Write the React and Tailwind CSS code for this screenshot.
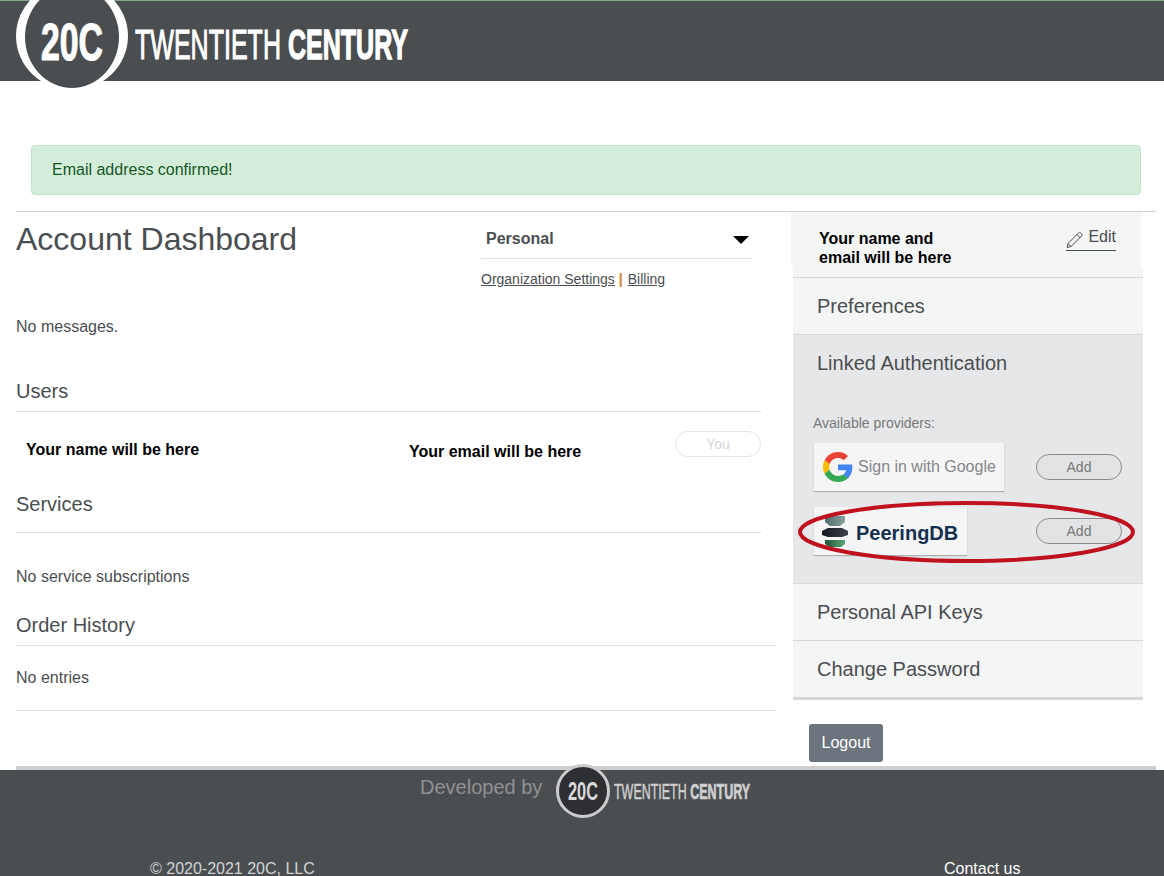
const HeaderLogo = () => (
  <svg className="absolute left-4 top-0 overflow-visible" width="400" height="90" viewBox="0 0 400 90">
    <ellipse cx="56" cy="35" rx="56" ry="54" fill="#ffffff" />
    <ellipse cx="56" cy="36" rx="47" ry="51" fill="#4b4e51" />
    <text x="25" y="59" fill="#fff" stroke="#fff" strokeWidth="1.2" fontFamily="Liberation Sans, sans-serif" fontWeight="700" fontSize="52" textLength="62" lengthAdjust="spacingAndGlyphs">20C</text>
    <text x="119" y="58" fill="#fff" stroke="#fff" strokeWidth="1.1" fontFamily="Liberation Sans, sans-serif" fontSize="43" textLength="273" lengthAdjust="spacingAndGlyphs">
      TWENTIETH <tspan fontWeight="700" strokeWidth="1.4">CENTURY</tspan>
    </text>
  </svg>
);

const FooterLogo = () => (
  <svg className="absolute left-[555px] top-[-7px] overflow-visible" width="196" height="56" viewBox="0 0 196 56">
    <circle cx="28" cy="28" r="25.5" fill="#2e2f32" stroke="#cccccc" strokeWidth="3" />
    <text x="13" y="37" fill="#d8d8d8" fontFamily="Liberation Sans, sans-serif" fontWeight="700" fontSize="25" textLength="30" lengthAdjust="spacingAndGlyphs">20C</text>
    <text x="59" y="36" fill="#d0d0d0" stroke="#d0d0d0" strokeWidth="0.5" fontFamily="Liberation Sans, sans-serif" fontSize="22" textLength="136" lengthAdjust="spacingAndGlyphs">
      TWENTIETH <tspan fontWeight="700" strokeWidth="0.7">CENTURY</tspan>
    </text>
  </svg>
);

const GoogleG = () => (
  <svg width="30" height="30" viewBox="0 0 48 48">
    <path fill="#EA4335" d="M24 9.5c3.54 0 6.71 1.22 9.21 3.6l6.85-6.85C35.9 2.38 30.47 0 24 0 14.62 0 6.51 5.38 2.56 13.22l7.98 6.19C12.43 13.72 17.74 9.5 24 9.5z" />
    <path fill="#4285F4" d="M46.98 24.55c0-1.57-.15-3.09-.38-4.55H24v9.02h12.94c-.58 2.96-2.26 5.48-4.78 7.18l7.73 6c4.51-4.18 7.09-10.36 7.09-17.65z" />
    <path fill="#FBBC05" d="M10.53 28.59c-.48-1.45-.76-2.99-.76-4.59s.27-3.14.76-4.59l-7.98-6.19C.92 16.46 0 20.12 0 24c0 3.88.92 7.54 2.56 10.78l7.97-6.19z" />
    <path fill="#34A853" d="M24 48c6.48 0 11.93-2.13 15.89-5.81l-7.73-6c-2.15 1.45-4.92 2.3-8.16 2.3-6.26 0-11.57-4.22-13.47-9.91l-7.98 6.19C6.51 42.62 14.62 48 24 48z" />
  </svg>
);

const PeeringMark = () => (
  <svg width="26" height="31" viewBox="0 0 26 31">
    <defs>
      <linearGradient id="peerTop" x1="0" x2="1" y1="0" y2="0">
        <stop offset="0" stopColor="#4f6e6b" />
        <stop offset="1" stopColor="#8ba19e" />
      </linearGradient>
      <linearGradient id="peerMid" x1="0" x2="1" y1="0" y2="0">
        <stop offset="0" stopColor="#14181e" />
        <stop offset="1" stopColor="#3d424a" />
      </linearGradient>
      <linearGradient id="peerBottom" x1="0" x2="1" y1="0" y2="0">
        <stop offset="0" stopColor="#24543a" />
        <stop offset="1" stopColor="#5aa576" />
      </linearGradient>
    </defs>
    <path d="M3 0h20v6l-5 4H8L3 6z" fill="url(#peerTop)" />
    <path d="M0 15l6-3h14l6 3v4l-6 2H6l-6-2z" fill="url(#peerMid)" />
    <path d="M3 24h20v4l-4 3H7l-4-3z" fill="url(#peerBottom)" />
  </svg>
);

const PencilIcon = () => (
  <svg width="18" height="18" viewBox="0 0 18 18" fill="none" stroke="#4b4e51" strokeWidth="1">
    <path d="M2 12.5 12.5 2a1.6 1.6 0 0 1 2.3 0l.7.7a1.6 1.6 0 0 1 0 2.3L5 15.5l-3.8 1z" />
    <path d="m11 3.5 3.5 3.5M2 12.5 5 15.5" />
  </svg>
);

const SectionTitle = ({ children, className }) => (
  <h3 className={`text-xl leading-6 ${className}`}>{children}</h3>
);

const AddButton = () => (
  <button className="w-[86px] h-[26px] rounded-full border border-[#8a8c8e] bg-[#e2e3e4] text-sm text-[#77797b]">
    Add
  </button>
);

const MenuRow = ({ children }) => (
  <div className="h-[57px] flex items-center pl-6 border-b border-[#d6d8da] bg-[#f4f5f5] text-xl">
    {children}
  </div>
);

export default function App() {
  return (
    <div className="relative h-[876px] overflow-hidden bg-white text-[#4b4e51] font-['Liberation_Sans',sans-serif]">
      <header className="relative h-[81px] bg-[#4b4e51] border-t border-[#8aa88a]">
        <HeaderLogo />
      </header>

      <div className="ml-[31px] mr-[23px] mt-16 h-[50px] flex items-center pl-5 bg-[#d4edda] border border-[#c3e6cb] rounded text-[#155724]">
        Email address confirmed!
      </div>

      <div className="ml-4 mr-2 mt-4 border-t border-[#cfcfcf] flex h-[555px]">
        <main className="w-[760px] shrink-0">
          <div className="flex h-[80px]">
            <h1 className="w-[465px] text-[32px] leading-[54px]">Account Dashboard</h1>
            <div className="w-[271px]">
              <div className="h-[47px] border-b border-[#dee0e2] flex items-center justify-between pl-[5px] pr-[3px] pt-[8px] font-bold">
                Personal
                <span className="w-0 h-0 mt-[2px] border-x-[8px] border-x-transparent border-t-[8px] border-t-black" />
              </div>
              <div className="mt-[10px] text-sm leading-5">
                <a className="underline">Organization Settings</a>
                <span className="ml-[4px] mr-[5px] font-bold text-[#c9801f]">|</span>
                <a className="underline">Billing</a>
              </div>
            </div>
          </div>

          <p className="mt-[23px] leading-6">No messages.</p>

          <div className="w-[745px]">
            <SectionTitle className="mt-[40px]">Users</SectionTitle>
            <div className="mt-[8px] border-t border-[#dee0e2] flex h-[60px] text-black font-bold">
              <span className="w-[393px] pl-[10px] pt-[26px] leading-6">Your name will be here</span>
              <span className="w-[266px] pt-[28px] leading-6">Your email will be here</span>
              <span className="w-[86px] h-[26px] mt-[19px] flex items-center justify-center rounded-full border border-[#e3e4e5] text-sm font-normal text-[#d6d7d8]">
                You
              </span>
            </div>
            <SectionTitle className="mt-[21px]">Services</SectionTitle>
            <div className="mt-[16px] border-t border-[#dee0e2]" />
            <p className="mt-[32px] leading-6">No service subscriptions</p>
          </div>

          <SectionTitle className="mt-[24px]">Order History</SectionTitle>
          <div className="mt-2 border-t border-[#dee0e2]" />
          <p className="mt-[20px] leading-6">No entries</p>
          <div className="mt-[20px] border-t border-[#dee0e2]" />
        </main>

        <aside className="w-[352px] ml-[15px] shrink-0">
          <div className="w-[350px] h-[55px] bg-[#f4f5f5] flex justify-between pl-7 pr-[25px] pt-[17px]">
            <p className="font-bold text-black leading-[19px]">
              Your name and<br />email will be here
            </p>
            <div className="h-[23px] -mt-[1px] flex items-start gap-1 border-b border-[#4b4e51] pb-[2px]">
              <span className="mt-[3px]"><PencilIcon /></span>
              <span className="leading-[18px]">Edit</span>
            </div>
          </div>
          <div className="relative ml-[2px] w-[350px]">
            <div className="h-[11px] bg-[#f4f5f5] border-b border-[#d6d8da]" />
            <MenuRow>Preferences</MenuRow>
            <div className="relative h-[249px] bg-[#e6e7e8] border-b border-[#d6d8da]">
              <div className="pl-6 pt-[16px] text-xl leading-6">Linked Authentication</div>
              <p className="ml-5 mt-[38px] text-sm leading-5 text-[#77797b]">Available providers:</p>
              <div className="ml-[21px] mr-[21px] mt-[10px] flex items-center justify-between">
                <div className="w-[190px] h-[48px] bg-[#f5f5f5] shadow-[0_1px_1px_rgba(0,0,0,0.25)] flex items-center pl-[9px] gap-[5px] text-[#85878a]">
                  <GoogleG />
                  <span className="whitespace-nowrap">Sign in with Google</span>
                </div>
                <AddButton />
              </div>
              <div className="ml-[21px] mr-[21px] mt-4 flex items-center justify-between">
                <div className="w-[153px] h-[48px] bg-[#f5f5f5] shadow-[0_1px_1px_rgba(0,0,0,0.25)] flex items-center pl-[8px] gap-[8px] text-[#14304f] font-bold text-[20px]">
                  <PeeringMark />
                  <span className="mt-[4px]">PeeringDB</span>
                </div>
                <AddButton />
              </div>
              <svg className="absolute left-[5px] top-[166px] overflow-visible" width="336" height="62" viewBox="0 0 336 62">
                <ellipse cx="168.5" cy="31" rx="166.5" ry="29" fill="none" stroke="#c0111f" strokeWidth="4" />
              </svg>
            </div>
            <MenuRow>Personal API Keys</MenuRow>
            <MenuRow>Change Password</MenuRow>
            <div className="h-[2px] bg-[#d6d8da]" />
            <button className="mt-[24px] ml-4 w-[74px] h-[38px] rounded-[3px] bg-[#6c757d] text-white">
              Logout
            </button>
          </div>
        </aside>
      </div>

      <footer className="relative">
        <div className="ml-4 mr-2 h-1 bg-[#cfcfcf]" />
        <div className="relative h-[106px] bg-[#4b4e51]">
          <span className="absolute left-[420px] top-[3px] text-xl text-[#8f9193]">Developed by</span>
          <FooterLogo />
          <div className="flex pl-[150px] pt-[89px] leading-5">
            <span className="w-[794px] text-[#d2d3d4]">© 2020-2021 20C, LLC</span>
            <span className="text-white">Contact us</span>
          </div>
        </div>
      </footer>
    </div>
  );
}
